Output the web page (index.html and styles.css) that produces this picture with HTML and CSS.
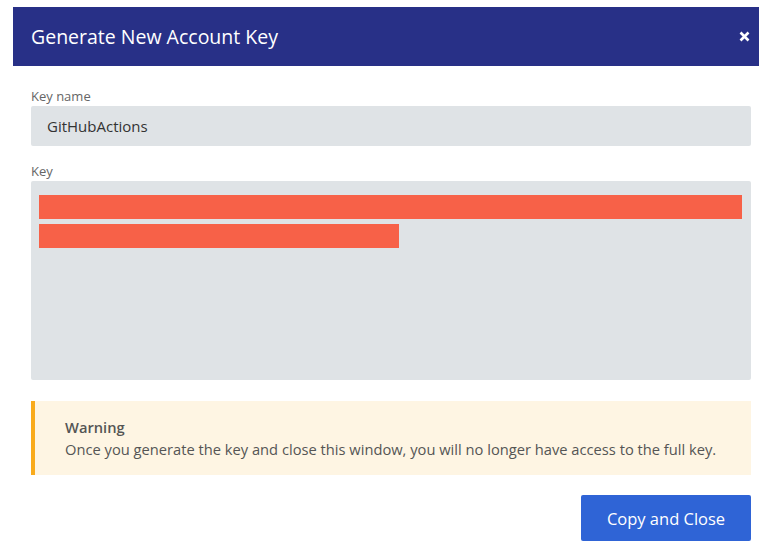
FILE: index.html
```html
<!DOCTYPE html>
<html>
<head>
<meta charset="utf-8">
<link rel="stylesheet" href="styles.css">
</head>
<body>
<div class="stage">
  <div class="modal">
    <div class="modal-header">
      <h1 class="modal-title">Generate New Account Key</h1>
      <button class="close-btn" aria-label="Close">
        <svg width="11" height="11" viewBox="0 0 11 11"><path d="M1.5 1.5 L9.5 9.5 M9.5 1.5 L1.5 9.5" stroke="#fff" stroke-width="2.6" stroke-linecap="butt"/></svg>
      </button>
    </div>
    <div class="modal-body">
      <label class="field-label">Key name</label>
      <div class="input">GitHubActions</div>
      <label class="field-label">Key</label>
      <div class="key-box">
        <div class="redact redact-full"></div>
        <div class="redact redact-half"></div>
      </div>
      <div class="warning">
        <div class="warning-title">Warning</div>
        <div class="warning-text">Once you generate the key and close this window, you will no longer have access to the full key.</div>
      </div>
      <div class="actions">
        <button class="primary-btn">Copy and Close</button>
      </div>
    </div>
  </div>
</div>
</body>
</html>
```

FILE: styles.css
```css
html, body {
  margin: 0;
  padding: 0;
  overflow: hidden;
  background: #ffffff;
}
body {
  font-family: "Open Sans", "Noto Sans", sans-serif;
  color: #333;
}
.stage {
  padding: 7px 0 0 13px;
}
.modal {
  width: 756px;
  background: #fff;
}
.modal-header {
  height: 59px;
  background: #283087;
  display: flex;
  align-items: center;
  justify-content: space-between;
  padding: 0 18px;
}
.modal-title {
  margin: 0;
  font-size: 19.5px;
  font-weight: 400;
  color: #fff;
}
.close-btn {
  background: none;
  border: 0;
  padding: 0;
  width: 11px;
  height: 11px;
  margin-right: 1px;
  display: flex;
}
.modal-body {
  padding: 21px 18px 0 18px;
  display: flex;
  flex-direction: column;
}
.field-label {
  font-size: 13px;
  line-height: 19px;
  color: #666;
}
.input {
  height: 40px;
  box-sizing: border-box;
  background: #dfe3e6;
  border-radius: 2px;
  padding: 0 16px;
  display: flex;
  align-items: center;
  font-size: 15px;
  color: #333;
  margin-bottom: 16px;
}
.key-box {
  height: 199px;
  box-sizing: border-box;
  background: #dfe3e6;
  border-radius: 2px;
  padding: 14px 8px 0 8px;
  display: flex;
  flex-direction: column;
  gap: 5px;
}
.redact {
  height: 24px;
  background: #f76148;
}
.redact-full { width: 703px; }
.redact-half { width: 360px; }
.warning {
  margin-top: 21px;
  background: #fef5e3;
  border-left: 4px solid #f9ab1c;
  padding: 15px 30px 15px 30px;
  font-size: 14.7px;
  line-height: 22px;
  color: #555;
}
.warning-title {
  font-weight: 600;
}
.actions {
  display: flex;
  justify-content: flex-end;
  margin-top: 20px;
}
.primary-btn {
  width: 170px;
  height: 46px;
  background: #2f64d6;
  border: 0;
  border-radius: 2px;
  color: #fff;
  font-family: inherit;
  font-size: 16.5px;
}
```
